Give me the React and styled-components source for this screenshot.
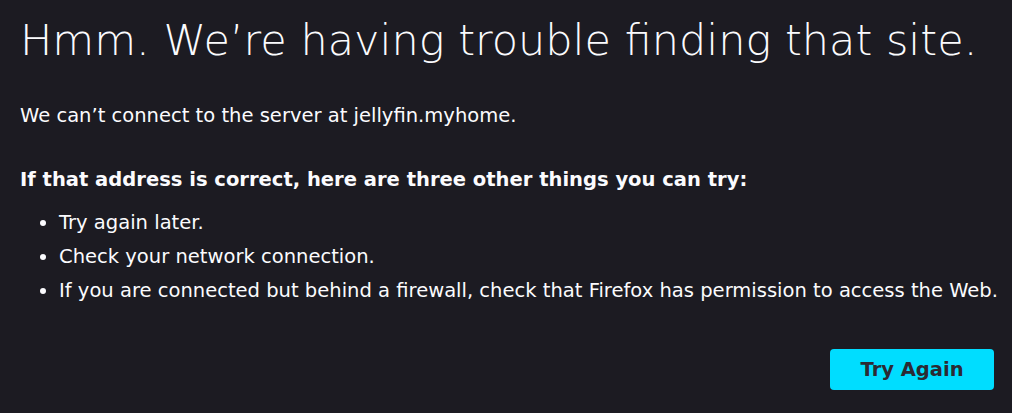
import React from "react";
import styled, { createGlobalStyle } from "styled-components";

const GlobalStyle = createGlobalStyle`
  html, body {
    margin: 0;
    padding: 0;
    background: #1c1b22;
  }
  body {
    font-family: "DejaVu Sans", "Liberation Sans", sans-serif;
    color: #fbfbfe;
  }
`;

const Page = styled.div`
  width: 1012px;
  height: 413px;
  box-sizing: border-box;
  padding: 14px 18px 0 20px;
  display: flex;
  flex-direction: column;
  overflow: hidden;
`;

const Title = styled.h1`
  margin: 0;
  font-size: 43px;
  font-weight: 200;
  line-height: 52px;
`;

const Text = styled.p`
  margin: ${(p) => p.$top || 0}px 0 0;
  font-size: 19.55px;
  line-height: 24px;
  font-weight: ${(p) => (p.$bold ? 700 : 400)};
`;

const List = styled.ul`
  margin: 19px 0 0;
  padding-left: 39px;
  font-size: 19.55px;
  line-height: 24px;
`;

const Item = styled.li`
  margin-bottom: 10px;
  white-space: nowrap;
`;

const Actions = styled.div`
  display: flex;
  justify-content: flex-end;
  margin-top: 36px;
`;

const Button = styled.button`
  width: 164px;
  height: 41px;
  border: none;
  border-radius: 4px;
  background: #00ddff;
  color: #2b2a33;
  font-family: "DejaVu Sans", sans-serif;
  font-size: 19.5px;
  font-weight: 700;
  cursor: pointer;
`;

export default function App() {
  return (
    <>
      <GlobalStyle />
      <Page>
        <Title>Hmm. We’re having trouble finding that site.</Title>
        <Text $top={38}>We can’t connect to the server at jellyfin.myhome.</Text>
        <Text $top={40} $bold>
          If that address is correct, here are three other things you can try:
        </Text>
        <List>
          <Item>Try again later.</Item>
          <Item>Check your network connection.</Item>
          <Item>
            If you are connected but behind a firewall, check that Firefox has
            permission to access the Web.
          </Item>
        </List>
        <Actions>
          <Button>Try Again</Button>
        </Actions>
      </Page>
    </>
  );
}
